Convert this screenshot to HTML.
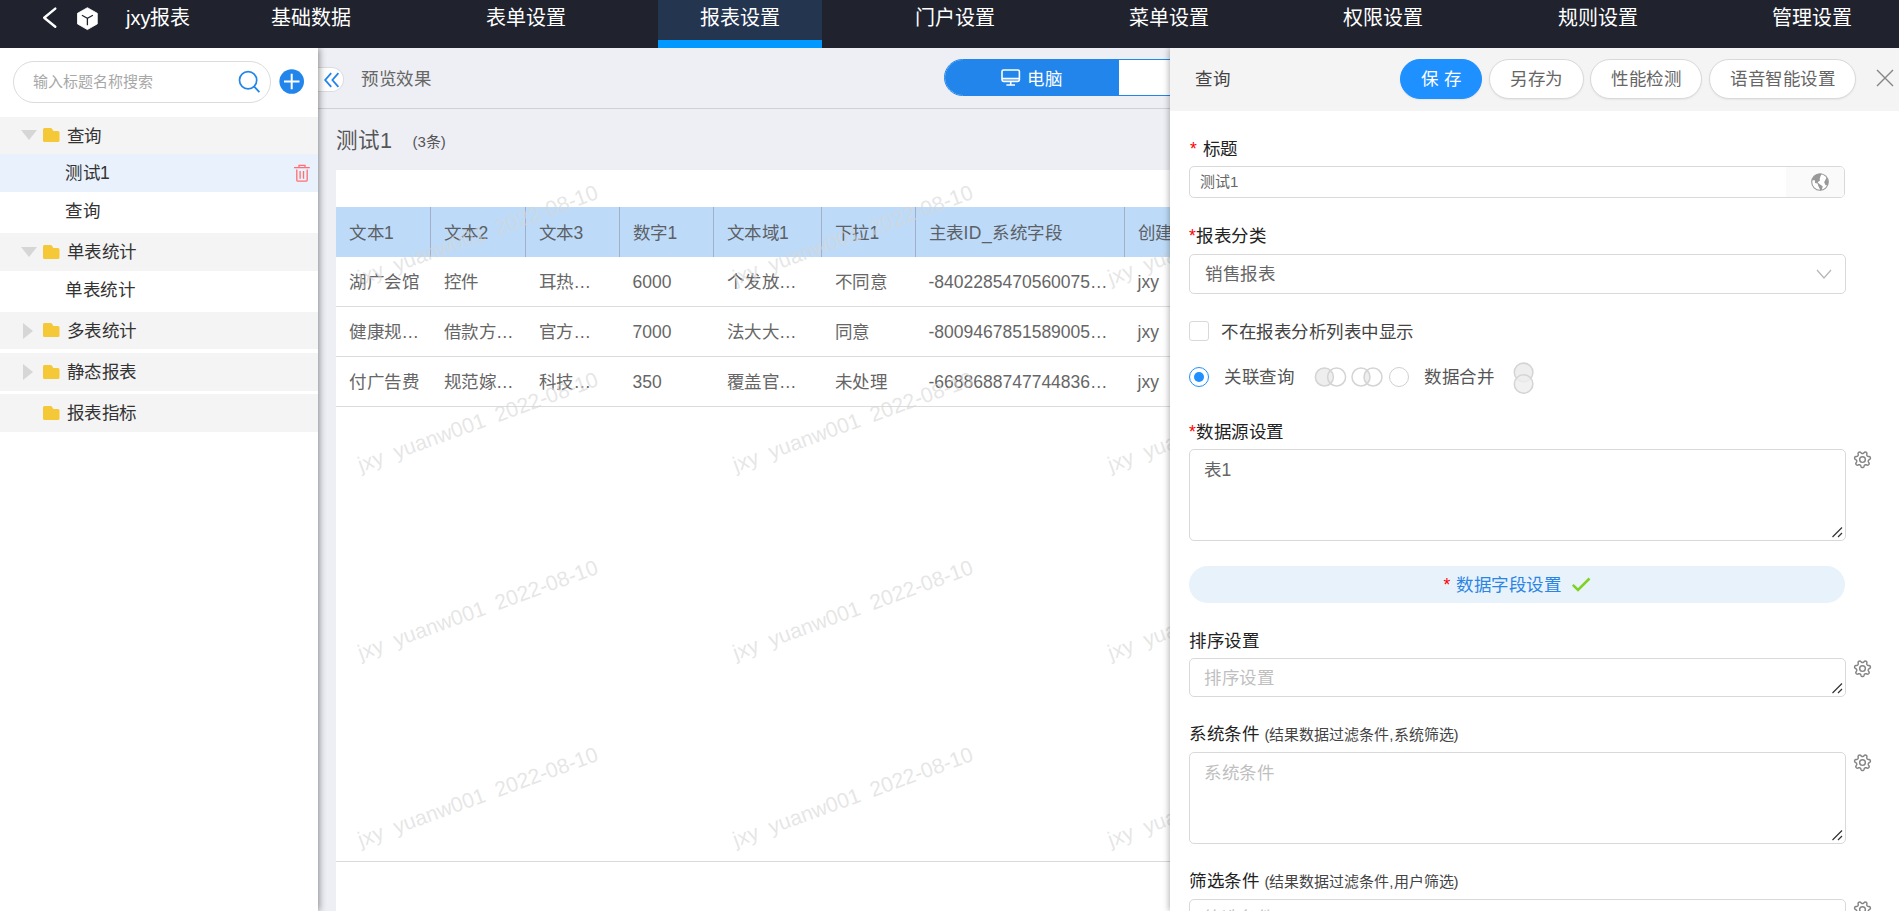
<!DOCTYPE html>
<html lang="zh-CN">
<head>
<meta charset="utf-8">
<title>jxy报表</title>
<style>
*{box-sizing:border-box;margin:0;padding:0}
html,body{width:1899px;height:911px;overflow:hidden}
body{font-family:"Liberation Sans",sans-serif;font-size:17.5px;color:#333;background:#eeeff5;position:relative}
.abs{position:absolute}
/* ---------- top nav ---------- */
#nav{position:absolute;left:0;top:0;width:1899px;height:48px;background:#20232e}
#nav .brand{position:absolute;left:126px;top:0;height:36px;line-height:36px;font-size:20px;color:#fff;white-space:nowrap}
#nav .tab{position:absolute;top:0;height:48px;width:164px;text-align:center;font-size:20px;line-height:36px;color:#fff;white-space:nowrap}
#nav .tab.on{background:#24354f;border-bottom:8px solid #0099ff}
/* ---------- sidebar ---------- */
#side{position:absolute;left:0;top:48px;width:318px;height:863px;background:#fff;box-shadow:1px 0 7px rgba(0,0,0,.45);z-index:5;clip-path:inset(0 -20px 0 0)}
#search{position:absolute;left:13px;top:13px;width:258px;height:42px;border:1px solid #dcdcdc;border-radius:21px;background:#fff}
#search span{position:absolute;left:19px;top:0;line-height:40px;font-size:15px;color:#a8a8a8;white-space:nowrap}
.grp{position:absolute;left:0;width:318px;height:37.5px;background:#f4f4f4;line-height:37.5px;font-size:17.5px;color:#333}
.grp .t{position:absolute;left:66.5px;top:1px;white-space:nowrap}
.leaf{position:absolute;left:0;width:318px;height:37.5px;line-height:37.5px;font-size:17.5px;color:#333}
.leaf .t{position:absolute;left:65px;top:1px;white-space:nowrap}
.leaf.sel{background:#e8f1fc}
.tri-d{position:absolute;left:20.6px;top:13.6px;width:0;height:0;border-left:8px solid transparent;border-right:8px solid transparent;border-top:10.4px solid #d6d6d6}
.tri-r{position:absolute;left:23px;top:11px;width:0;height:0;border-top:8px solid transparent;border-bottom:8px solid transparent;border-left:10px solid #d6d6d6}
.folder{position:absolute;left:43px;top:11.5px;width:16.5px;height:14px}
/* ---------- middle ---------- */
#mid{position:absolute;left:318px;top:48px;width:1581px;height:863px;background:#eeeff5}
#toolbar{position:absolute;left:0;top:0;width:1581px;height:61px;border-bottom:1px solid #cfcfd4}
#collapse{position:absolute;left:-1px;top:19px;width:26.5px;height:25px;background:#fff;border:1px solid #dcdcdc;border-left:none;border-radius:0 12.5px 12.5px 0}
#pv{position:absolute;left:43px;top:0;line-height:62px;font-size:17.5px;color:#666;white-space:nowrap}
#toggle{position:absolute;left:626px;top:11px;width:400px;height:37px;border-radius:18.5px;border:1px solid #2185eb;background:#fff;overflow:hidden}
#toggle .a{position:absolute;left:-1px;top:-1px;width:175px;height:37px;background:#2185eb;color:#fff;font-size:17.5px;line-height:37px}
#toggle .a span{position:absolute;left:83px;top:2px;white-space:nowrap}
#ttl{position:absolute;left:18px;top:78.5px;font-size:21.6px;line-height:28px;color:#555;white-space:nowrap}
#cnt{position:absolute;left:94.5px;top:84.5px;font-size:15px;line-height:18px;color:#555;white-space:nowrap}
#card{position:absolute;left:18px;top:122px;width:1563px;height:741px;background:#fff;overflow:hidden}
#card .bl{position:absolute;left:0;top:691px;width:1563px;height:1px;background:#d9d9d9}
table{position:absolute;left:0;top:37px;border-collapse:separate;border-spacing:0;table-layout:fixed;font-size:17.5px;color:#666}
th{height:50px;background:#bddbf8;font-weight:normal;text-align:left;padding:0 0 2px 13px;border-right:1px solid #a3afc6;white-space:nowrap;overflow:hidden;color:#5c6066}
td{height:50px;padding:0 0 2px 13px;border-bottom:1px solid #dcdcdc;white-space:nowrap;overflow:hidden}
td.l{padding-top:3px;padding-bottom:2px}
#wm{position:absolute;left:0;top:0;width:1563px;height:741px;overflow:hidden;pointer-events:none}
#wm i{position:absolute;font-style:normal;font-size:21.15px;line-height:24px;color:rgba(214,214,214,.62);white-space:pre;transform:rotate(-20deg);transform-origin:50% 50%;width:260px;text-align:center;margin-left:-129.5px;margin-top:-14.5px}
/* ---------- right panel ---------- */
#panel{position:absolute;left:1170px;top:48px;width:729px;height:863px;background:#fff;box-shadow:-1px 0 6px rgba(0,0,0,.3);z-index:6;overflow:hidden;clip-path:inset(0 0 0 -20px)}
#phead{position:absolute;left:0;top:0;width:729px;height:62.5px;background:#f4f4f4}
#phead .h{position:absolute;left:25px;top:0;line-height:63px;font-size:17.5px;color:#444}
.btn{position:absolute;top:11px;height:40px;border-radius:20px;border:1px solid #d9d9d9;box-shadow:0 1px 2px rgba(0,0,0,.06);background:#fff;color:#666;font-size:17.5px;line-height:38px;text-align:center;white-space:nowrap}
.btn.pri{background:#1e90ff;border-color:#1e90ff;color:#fff}
.lab{position:absolute;left:19px;font-size:17.5px;line-height:24px;color:#222;white-space:nowrap}
.lab b{font-weight:normal;color:#f00}
.lab small{font-size:15px;color:#444}
.inp{position:absolute;left:19px;width:657px;border:1px solid #d9d9d9;border-radius:5px;background:#fff;color:#666;white-space:nowrap}
.ph{color:#bfbfbf}
.gear{position:absolute;left:683px;width:19px;height:19px}
.rsz{position:absolute;right:2px;bottom:2px;width:12px;height:12px}

/* Chrome rounds 17.5px CJK advances down to 17px; compensate */
.grp,.leaf,#pv,#toggle .a,table,.btn,.lab,.inp,#phead .h,.pill{letter-spacing:.5px}
td.l,.lab small,.ls0{letter-spacing:0}
</style>
</head>
<body>

<!-- NAV -->
<div id="nav">
  <svg class="abs" style="left:40px;top:4px" width="22" height="28" viewBox="0 0 22 28"><path d="M15.3 4.6 L4.2 13.7 L15.3 22.8" fill="none" stroke="#fff" stroke-width="2.4" stroke-linecap="round" stroke-linejoin="round"/></svg>
  <svg class="abs" style="left:75px;top:5px" width="25" height="27" viewBox="0 0 25 27"><path d="M12.4 2.7 L22.3 8.3 L22.3 18.9 L12.4 24.6 L2.5 18.9 L2.5 8.3 Z" fill="#fff" stroke="#fff" stroke-width=".8" stroke-linejoin="round"/><path d="M6.9 10.3 L12.4 13.2 L17.9 10.3 M12.4 13.2 L12.4 20.2" fill="none" stroke="#20232e" stroke-width="1.3"/></svg>
  <div class="brand">jxy报表</div>
  <div class="tab" style="left:229px">基础数据</div>
  <div class="tab" style="left:444px">表单设置</div>
  <div class="tab on" style="left:658px">报表设置</div>
  <div class="tab" style="left:873px">门户设置</div>
  <div class="tab" style="left:1087px">菜单设置</div>
  <div class="tab" style="left:1301px">权限设置</div>
  <div class="tab" style="left:1516px">规则设置</div>
  <div class="tab" style="left:1730px">管理设置</div>
</div>

<!-- SIDEBAR -->
<div id="side">
  <div id="search"><span>输入标题名称搜索</span>
    <svg class="abs" style="left:222px;top:5.8px" width="28" height="28" viewBox="0 0 28 28"><circle cx="12.1" cy="12.2" r="8.6" fill="none" stroke="#2185eb" stroke-width="1.7"/><path d="M18 18.4 L23.4 24.2" stroke="#2185eb" stroke-width="1.8" stroke-linecap="butt"/></svg>
  </div>
  <svg class="abs" style="left:279px;top:21px" width="26" height="26" viewBox="0 0 26 26"><circle cx="12.7" cy="12.5" r="12.3" fill="#2185eb"/><path d="M5 12.5 H20.5 M12.7 4.8 V20.2" stroke="#fff" stroke-width="2"/></svg>

  <div class="grp" style="top:68.75px"><div class="tri-d"></div><svg class="folder" viewBox="0 0 16.5 14"><path d="M1.5 0 H7.6 Q8.6 0 9.2 1 L10.3 3.1 H15 Q16.5 3.1 16.5 4.6 V12.5 Q16.5 14 15 14 H1.5 Q0 14 0 12.5 V1.5 Q0 0 1.5 0 Z" fill="#f5c837"/></svg><span class="t">查询</span></div>
  <div class="leaf sel" style="top:106.25px"><span class="t">测试1</span>
    <svg class="abs" style="left:293px;top:9px" width="18" height="20" viewBox="0 0 18 20"><path d="M1 9.6 H16.8 M6 9 V7.4 H12 V9 M3.8 11.4 V22 Q3.8 23.2 5 23.2 H13 Q14.2 23.2 14.2 22 V11.4 M7.1 13 V20.8 M10.5 13 V20.8" transform="translate(0,-5)" fill="none" stroke="#ff6e73" stroke-width="1.3"/></svg>
  </div>
  <div class="leaf" style="top:143.75px"><span class="t">查询</span></div>
  <div class="grp" style="top:185px"><div class="tri-d"></div><svg class="folder" viewBox="0 0 16.5 14"><path d="M1.5 0 H7.6 Q8.6 0 9.2 1 L10.3 3.1 H15 Q16.5 3.1 16.5 4.6 V12.5 Q16.5 14 15 14 H1.5 Q0 14 0 12.5 V1.5 Q0 0 1.5 0 Z" fill="#f5c837"/></svg><span class="t">单表统计</span></div>
  <div class="leaf" style="top:222.5px"><span class="t">单表统计</span></div>
  <div class="grp" style="top:263.75px"><div class="tri-r"></div><svg class="folder" viewBox="0 0 16.5 14"><path d="M1.5 0 H7.6 Q8.6 0 9.2 1 L10.3 3.1 H15 Q16.5 3.1 16.5 4.6 V12.5 Q16.5 14 15 14 H1.5 Q0 14 0 12.5 V1.5 Q0 0 1.5 0 Z" fill="#f5c837"/></svg><span class="t">多表统计</span></div>
  <div class="grp" style="top:305px"><div class="tri-r"></div><svg class="folder" viewBox="0 0 16.5 14"><path d="M1.5 0 H7.6 Q8.6 0 9.2 1 L10.3 3.1 H15 Q16.5 3.1 16.5 4.6 V12.5 Q16.5 14 15 14 H1.5 Q0 14 0 12.5 V1.5 Q0 0 1.5 0 Z" fill="#f5c837"/></svg><span class="t">静态报表</span></div>
  <div class="grp" style="top:346.25px"><svg class="folder" viewBox="0 0 16.5 14"><path d="M1.5 0 H7.6 Q8.6 0 9.2 1 L10.3 3.1 H15 Q16.5 3.1 16.5 4.6 V12.5 Q16.5 14 15 14 H1.5 Q0 14 0 12.5 V1.5 Q0 0 1.5 0 Z" fill="#f5c837"/></svg><span class="t">报表指标</span></div>
</div>

<!-- MIDDLE -->
<div id="mid">
  <div id="toolbar">
    <div id="collapse"><svg class="abs" style="left:5.6px;top:4px" width="18" height="16" viewBox="0 0 18 16"><path d="M8.2 1.2 L2.2 8 L8.2 14.8 M15.4 1.2 L9.4 8 L15.4 14.8" fill="none" stroke="#2185eb" stroke-width="1.8"/></svg></div>
    <div id="pv">预览效果</div>
    <div id="toggle"><div class="a">
      <svg class="abs" style="left:57px;top:10px" width="20" height="18" viewBox="0 0 20 18"><rect x="1" y="1" width="17.4" height="11.4" rx="1.6" fill="none" stroke="#fff" stroke-width="1.6"/><path d="M1 9.6 H18.4 M9.7 12.4 V15.6 M5.4 16 H14" stroke="#fff" stroke-width="1.6" fill="none"/></svg>
      <span>电脑</span></div></div>
  </div>
  <div id="ttl">测试1</div>
  <div id="cnt">(3条)</div>
  <div id="card">
    <table>
      <colgroup><col style="width:94.5px"><col style="width:95px"><col style="width:94px"><col style="width:94px"><col style="width:108px"><col style="width:94px"><col style="width:209px"><col style="width:120px"></colgroup>
      <tr><th>文本1</th><th>文本2</th><th>文本3</th><th>数字1</th><th>文本域1</th><th>下拉1</th><th>主表ID_系统字段</th><th>创建人</th></tr>
      <tr><td>湖广会馆</td><td>控件</td><td>耳热…</td><td class="l">6000</td><td>个发放…</td><td>不同意</td><td class="l">-8402285470560075…</td><td class="l">jxy</td></tr>
      <tr><td>健康规…</td><td>借款方…</td><td>官方…</td><td class="l">7000</td><td>法大大…</td><td>同意</td><td class="l">-8009467851589005…</td><td class="l">jxy</td></tr>
      <tr><td>付广告费</td><td>规范嫁…</td><td>科技…</td><td class="l">350</td><td>覆盖官…</td><td>未处理</td><td class="l">-6688688747744836…</td><td class="l">jxy</td></tr>
    </table>
    <div class="bl"></div>
    <div id="wm"><i style="left:141.5px;top:67px">jxy  yuanw001  2022-08-10</i><i style="left:516.5px;top:67px">jxy  yuanw001  2022-08-10</i><i style="left:891.5px;top:67px">jxy  yuanw001  2022-08-10</i><i style="left:141.5px;top:254.5px">jxy  yuanw001  2022-08-10</i><i style="left:516.5px;top:254.5px">jxy  yuanw001  2022-08-10</i><i style="left:891.5px;top:254.5px">jxy  yuanw001  2022-08-10</i><i style="left:141.5px;top:442px">jxy  yuanw001  2022-08-10</i><i style="left:516.5px;top:442px">jxy  yuanw001  2022-08-10</i><i style="left:891.5px;top:442px">jxy  yuanw001  2022-08-10</i><i style="left:141.5px;top:629.5px">jxy  yuanw001  2022-08-10</i><i style="left:516.5px;top:629.5px">jxy  yuanw001  2022-08-10</i><i style="left:891.5px;top:629.5px">jxy  yuanw001  2022-08-10</i><i style="left:141.5px;top:817px">jxy  yuanw001  2022-08-10</i><i style="left:516.5px;top:817px">jxy  yuanw001  2022-08-10</i><i style="left:891.5px;top:817px">jxy  yuanw001  2022-08-10</i></div>
  </div>
</div>

<!-- RIGHT PANEL -->
<div id="panel">
  <div id="phead">
    <div class="h">查询</div>
    <div class="btn pri" style="left:230px;width:82px">保 存</div>
    <div class="btn" style="left:319px;width:95px">另存为</div>
    <div class="btn" style="left:420px;width:112px">性能检测</div>
    <div class="btn" style="left:539px;width:147px">语音智能设置</div>
    <svg class="abs" style="left:705px;top:20px" width="20" height="20" viewBox="0 0 20 20"><path d="M2 2 L18 18 M18 2 L2 18" stroke="#858585" stroke-width="1.4" fill="none"/></svg>
  </div>

  <div class="lab" style="top:89px;left:20px"><b>*</b> 标题</div>
  <div class="inp ls0" style="top:118px;height:32px;line-height:30px;font-size:15px;padding-left:10px;width:656px">测试1
    <div class="abs" style="right:0;top:0;width:58px;height:30px;background:#fafafa;border-radius:0 4px 4px 0"></div>
    <svg class="abs" style="left:620px;top:5px" width="20" height="20" viewBox="0 0 20 20"><circle cx="10" cy="10" r="8.3" fill="#fff"/><path d="M11.8 1.85 A8.4 8.4 0 0 0 1.9 8.2 L4.96 8.2 L4.96 10.9 L7.6 11.5 L8.2 13.85 L9.7 16.8 L10 18.4 L11.8 18.1 L12.7 14.15 L9.4 12.1 L7.6 10.3 L10 8.5 L9.7 6.7 L10.6 4.1 Z M16.6 5.6 L14.15 10.3 L15.6 13.25 L17.7 13.25 A8.4 8.4 0 0 0 16.6 5.6 Z" fill="#999"/><circle cx="10" cy="10" r="8.3" fill="none" stroke="#999" stroke-width="1.1"/></svg>
  </div>
  <div class="lab" style="top:176px"><b>*</b>报表分类</div>
  <div class="inp" style="top:206px;height:40px;line-height:38px;padding-left:15px;width:657px">销售报表
    <svg class="abs" style="left:625px;top:12px" width="18" height="14" viewBox="0 0 18 14"><path d="M2 3 L9 11 L16 3" fill="none" stroke="#b8b8b8" stroke-width="1.3"/></svg>
  </div>
  <div class="abs" style="left:19px;top:273px;width:20px;height:20px;border:1px solid #d9d9d9;border-radius:3px;background:#fff"></div>
  <div class="lab" style="left:51px;top:272px;color:#444">不在报表分析列表中显示</div>
  <div class="abs" style="left:19px;top:319px;width:20px;height:20px;border:1px solid #1e90ff;border-radius:50%;background:#fff"><div class="abs" style="left:4px;top:4px;width:10px;height:10px;border-radius:50%;background:#1e90ff"></div></div>
  <div class="lab" style="left:54px;top:317px;color:#555">关联查询</div>
  <svg class="abs" style="left:143px;top:318px" width="72" height="22" viewBox="0 0 72 22"><circle cx="11.4" cy="11" r="9" fill="#eee" stroke="#d4d4d4" stroke-width="1.55"/><circle cx="23.6" cy="11" r="9" fill="none" stroke="#d4d4d4" stroke-width="1.55"/><path d="M54 4.3 A9 9 0 0 1 54 17.7 A9 9 0 0 1 54 4.3 Z" fill="#eee"/><circle cx="48" cy="11" r="9" fill="none" stroke="#d4d4d4" stroke-width="1.55"/><circle cx="60" cy="11" r="9" fill="none" stroke="#d4d4d4" stroke-width="1.55"/></svg>
  <div class="abs" style="left:219px;top:319px;width:20px;height:20px;border:1px solid #d0d0d0;border-radius:50%;background:#fff"></div>
  <div class="lab" style="left:254px;top:317px;color:#555">数据合并</div>
  <svg class="abs" style="left:342px;top:313px" width="24" height="34" viewBox="0 0 24 34"><circle cx="11.6" cy="11.4" r="9.3" fill="#eee" stroke="#d4d4d4" stroke-width="1.55"/><circle cx="11.6" cy="23" r="9.3" fill="#eee" fill-opacity=".8" stroke="#d4d4d4" stroke-width="1.55"/></svg>

  <div class="lab" style="top:372px"><b>*</b>数据源设置</div>
  <div class="inp" style="top:401px;height:92px;padding:8px 14px;line-height:24px">表1<svg class="rsz" viewBox="0 0 12 12"><path d="M1.5 11 L11 1.5 M7 11 L11 7" stroke="#333" stroke-width="1.2" fill="none"/></svg></div>
  <svg class="gear" style="top:402px" viewBox="0 0 19 19"><path d="M9.50 3.55 L9.77 3.54 L10.04 3.50 L10.33 3.39 L10.66 3.13 L11.06 2.68 L11.50 2.25 L11.92 2.05 L12.30 2.03 L12.66 2.11 L12.99 2.25 L13.31 2.42 L13.59 2.65 L13.82 2.96 L13.92 3.42 L13.86 4.03 L13.76 4.62 L13.76 5.05 L13.85 5.34 L13.99 5.58 L14.15 5.79 L14.33 5.99 L14.52 6.18 L14.79 6.34 L15.20 6.43 L15.81 6.46 L16.42 6.54 L16.84 6.75 L17.09 7.03 L17.25 7.36 L17.35 7.71 L17.41 8.07 L17.41 8.43 L17.31 8.80 L17.01 9.16 L16.50 9.50 L15.97 9.79 L15.64 10.05 L15.47 10.31 L15.37 10.56 L15.30 10.82 L15.25 11.09 L15.23 11.36 L15.27 11.67 L15.46 12.05 L15.81 12.54 L16.12 13.06 L16.23 13.52 L16.16 13.90 L16.00 14.22 L15.79 14.52 L15.55 14.79 L15.27 15.01 L14.92 15.17 L14.45 15.16 L13.86 14.97 L13.31 14.74 L12.89 14.64 L12.59 14.67 L12.33 14.75 L12.08 14.86 L11.84 14.98 L11.62 15.14 L11.40 15.36 L11.22 15.75 L11.06 16.32 L10.84 16.90 L10.55 17.27 L10.22 17.45 L9.86 17.53 L9.50 17.55 L9.14 17.53 L8.78 17.45 L8.45 17.27 L8.16 16.90 L7.94 16.32 L7.78 15.75 L7.60 15.36 L7.38 15.14 L7.16 14.98 L6.92 14.86 L6.67 14.75 L6.41 14.67 L6.11 14.64 L5.69 14.74 L5.14 14.97 L4.55 15.16 L4.08 15.17 L3.73 15.01 L3.45 14.79 L3.21 14.52 L3.00 14.22 L2.84 13.90 L2.77 13.52 L2.88 13.06 L3.19 12.54 L3.54 12.05 L3.73 11.67 L3.77 11.36 L3.75 11.09 L3.70 10.82 L3.63 10.56 L3.53 10.31 L3.36 10.05 L3.03 9.79 L2.50 9.50 L1.99 9.16 L1.69 8.80 L1.59 8.43 L1.59 8.07 L1.65 7.71 L1.75 7.36 L1.91 7.03 L2.16 6.75 L2.58 6.54 L3.19 6.46 L3.80 6.43 L4.21 6.34 L4.48 6.18 L4.67 5.99 L4.85 5.79 L5.01 5.58 L5.15 5.34 L5.24 5.05 L5.24 4.62 L5.14 4.03 L5.08 3.42 L5.18 2.96 L5.41 2.65 L5.69 2.42 L6.01 2.25 L6.34 2.11 L6.70 2.03 L7.08 2.05 L7.50 2.25 L7.94 2.68 L8.34 3.13 L8.67 3.39 L8.96 3.50 L9.23 3.54 Z" fill="none" stroke="#858585" stroke-width="1.45" stroke-linejoin="round"/><circle cx="9.5" cy="9.5" r="2.85" fill="none" stroke="#858585" stroke-width="1.45"/></svg>
  <div class="abs pill" style="left:19px;top:518px;width:656px;height:36.5px;border-radius:18.5px;background:#e8f2fb;text-align:center;line-height:39.5px;color:#2b85e4;white-space:nowrap"><span style="color:#f00">*</span> 数据字段设置 <svg width="20" height="15" viewBox="0 0 20 15" style="vertical-align:-1px;margin-left:4px"><path d="M1.8 7.8 L7 13 L18.5 1.5" fill="none" stroke="#7ed321" stroke-width="2.5"/></svg></div>
  <div class="lab" style="top:581px">排序设置</div>
  <div class="inp ph" style="top:610px;height:39px;padding:0 14px;line-height:39px">排序设置<svg class="rsz" viewBox="0 0 12 12"><path d="M1.5 11 L11 1.5 M7 11 L11 7" stroke="#333" stroke-width="1.2" fill="none"/></svg></div>
  <svg class="gear" style="top:611px" viewBox="0 0 19 19"><path d="M9.50 3.55 L9.77 3.54 L10.04 3.50 L10.33 3.39 L10.66 3.13 L11.06 2.68 L11.50 2.25 L11.92 2.05 L12.30 2.03 L12.66 2.11 L12.99 2.25 L13.31 2.42 L13.59 2.65 L13.82 2.96 L13.92 3.42 L13.86 4.03 L13.76 4.62 L13.76 5.05 L13.85 5.34 L13.99 5.58 L14.15 5.79 L14.33 5.99 L14.52 6.18 L14.79 6.34 L15.20 6.43 L15.81 6.46 L16.42 6.54 L16.84 6.75 L17.09 7.03 L17.25 7.36 L17.35 7.71 L17.41 8.07 L17.41 8.43 L17.31 8.80 L17.01 9.16 L16.50 9.50 L15.97 9.79 L15.64 10.05 L15.47 10.31 L15.37 10.56 L15.30 10.82 L15.25 11.09 L15.23 11.36 L15.27 11.67 L15.46 12.05 L15.81 12.54 L16.12 13.06 L16.23 13.52 L16.16 13.90 L16.00 14.22 L15.79 14.52 L15.55 14.79 L15.27 15.01 L14.92 15.17 L14.45 15.16 L13.86 14.97 L13.31 14.74 L12.89 14.64 L12.59 14.67 L12.33 14.75 L12.08 14.86 L11.84 14.98 L11.62 15.14 L11.40 15.36 L11.22 15.75 L11.06 16.32 L10.84 16.90 L10.55 17.27 L10.22 17.45 L9.86 17.53 L9.50 17.55 L9.14 17.53 L8.78 17.45 L8.45 17.27 L8.16 16.90 L7.94 16.32 L7.78 15.75 L7.60 15.36 L7.38 15.14 L7.16 14.98 L6.92 14.86 L6.67 14.75 L6.41 14.67 L6.11 14.64 L5.69 14.74 L5.14 14.97 L4.55 15.16 L4.08 15.17 L3.73 15.01 L3.45 14.79 L3.21 14.52 L3.00 14.22 L2.84 13.90 L2.77 13.52 L2.88 13.06 L3.19 12.54 L3.54 12.05 L3.73 11.67 L3.77 11.36 L3.75 11.09 L3.70 10.82 L3.63 10.56 L3.53 10.31 L3.36 10.05 L3.03 9.79 L2.50 9.50 L1.99 9.16 L1.69 8.80 L1.59 8.43 L1.59 8.07 L1.65 7.71 L1.75 7.36 L1.91 7.03 L2.16 6.75 L2.58 6.54 L3.19 6.46 L3.80 6.43 L4.21 6.34 L4.48 6.18 L4.67 5.99 L4.85 5.79 L5.01 5.58 L5.15 5.34 L5.24 5.05 L5.24 4.62 L5.14 4.03 L5.08 3.42 L5.18 2.96 L5.41 2.65 L5.69 2.42 L6.01 2.25 L6.34 2.11 L6.70 2.03 L7.08 2.05 L7.50 2.25 L7.94 2.68 L8.34 3.13 L8.67 3.39 L8.96 3.50 L9.23 3.54 Z" fill="none" stroke="#858585" stroke-width="1.45" stroke-linejoin="round"/><circle cx="9.5" cy="9.5" r="2.85" fill="none" stroke="#858585" stroke-width="1.45"/></svg>
  <div class="lab" style="top:674px">系统条件 <small>(结果数据过滤条件,系统筛选)</small></div>
  <div class="inp ph" style="top:704px;height:92px;padding:8px 14px;line-height:24px">系统条件<svg class="rsz" viewBox="0 0 12 12"><path d="M1.5 11 L11 1.5 M7 11 L11 7" stroke="#333" stroke-width="1.2" fill="none"/></svg></div>
  <svg class="gear" style="top:705px" viewBox="0 0 19 19"><path d="M9.50 3.55 L9.77 3.54 L10.04 3.50 L10.33 3.39 L10.66 3.13 L11.06 2.68 L11.50 2.25 L11.92 2.05 L12.30 2.03 L12.66 2.11 L12.99 2.25 L13.31 2.42 L13.59 2.65 L13.82 2.96 L13.92 3.42 L13.86 4.03 L13.76 4.62 L13.76 5.05 L13.85 5.34 L13.99 5.58 L14.15 5.79 L14.33 5.99 L14.52 6.18 L14.79 6.34 L15.20 6.43 L15.81 6.46 L16.42 6.54 L16.84 6.75 L17.09 7.03 L17.25 7.36 L17.35 7.71 L17.41 8.07 L17.41 8.43 L17.31 8.80 L17.01 9.16 L16.50 9.50 L15.97 9.79 L15.64 10.05 L15.47 10.31 L15.37 10.56 L15.30 10.82 L15.25 11.09 L15.23 11.36 L15.27 11.67 L15.46 12.05 L15.81 12.54 L16.12 13.06 L16.23 13.52 L16.16 13.90 L16.00 14.22 L15.79 14.52 L15.55 14.79 L15.27 15.01 L14.92 15.17 L14.45 15.16 L13.86 14.97 L13.31 14.74 L12.89 14.64 L12.59 14.67 L12.33 14.75 L12.08 14.86 L11.84 14.98 L11.62 15.14 L11.40 15.36 L11.22 15.75 L11.06 16.32 L10.84 16.90 L10.55 17.27 L10.22 17.45 L9.86 17.53 L9.50 17.55 L9.14 17.53 L8.78 17.45 L8.45 17.27 L8.16 16.90 L7.94 16.32 L7.78 15.75 L7.60 15.36 L7.38 15.14 L7.16 14.98 L6.92 14.86 L6.67 14.75 L6.41 14.67 L6.11 14.64 L5.69 14.74 L5.14 14.97 L4.55 15.16 L4.08 15.17 L3.73 15.01 L3.45 14.79 L3.21 14.52 L3.00 14.22 L2.84 13.90 L2.77 13.52 L2.88 13.06 L3.19 12.54 L3.54 12.05 L3.73 11.67 L3.77 11.36 L3.75 11.09 L3.70 10.82 L3.63 10.56 L3.53 10.31 L3.36 10.05 L3.03 9.79 L2.50 9.50 L1.99 9.16 L1.69 8.80 L1.59 8.43 L1.59 8.07 L1.65 7.71 L1.75 7.36 L1.91 7.03 L2.16 6.75 L2.58 6.54 L3.19 6.46 L3.80 6.43 L4.21 6.34 L4.48 6.18 L4.67 5.99 L4.85 5.79 L5.01 5.58 L5.15 5.34 L5.24 5.05 L5.24 4.62 L5.14 4.03 L5.08 3.42 L5.18 2.96 L5.41 2.65 L5.69 2.42 L6.01 2.25 L6.34 2.11 L6.70 2.03 L7.08 2.05 L7.50 2.25 L7.94 2.68 L8.34 3.13 L8.67 3.39 L8.96 3.50 L9.23 3.54 Z" fill="none" stroke="#858585" stroke-width="1.45" stroke-linejoin="round"/><circle cx="9.5" cy="9.5" r="2.85" fill="none" stroke="#858585" stroke-width="1.45"/></svg>
  <div class="lab" style="top:821px">筛选条件 <small>(结果数据过滤条件,用户筛选)</small></div>
  <div class="inp ph" style="top:851px;height:92px;padding:6px 14px;line-height:24px">筛选条件</div>
  <svg class="gear" style="top:852px" viewBox="0 0 19 19"><path d="M9.50 3.55 L9.77 3.54 L10.04 3.50 L10.33 3.39 L10.66 3.13 L11.06 2.68 L11.50 2.25 L11.92 2.05 L12.30 2.03 L12.66 2.11 L12.99 2.25 L13.31 2.42 L13.59 2.65 L13.82 2.96 L13.92 3.42 L13.86 4.03 L13.76 4.62 L13.76 5.05 L13.85 5.34 L13.99 5.58 L14.15 5.79 L14.33 5.99 L14.52 6.18 L14.79 6.34 L15.20 6.43 L15.81 6.46 L16.42 6.54 L16.84 6.75 L17.09 7.03 L17.25 7.36 L17.35 7.71 L17.41 8.07 L17.41 8.43 L17.31 8.80 L17.01 9.16 L16.50 9.50 L15.97 9.79 L15.64 10.05 L15.47 10.31 L15.37 10.56 L15.30 10.82 L15.25 11.09 L15.23 11.36 L15.27 11.67 L15.46 12.05 L15.81 12.54 L16.12 13.06 L16.23 13.52 L16.16 13.90 L16.00 14.22 L15.79 14.52 L15.55 14.79 L15.27 15.01 L14.92 15.17 L14.45 15.16 L13.86 14.97 L13.31 14.74 L12.89 14.64 L12.59 14.67 L12.33 14.75 L12.08 14.86 L11.84 14.98 L11.62 15.14 L11.40 15.36 L11.22 15.75 L11.06 16.32 L10.84 16.90 L10.55 17.27 L10.22 17.45 L9.86 17.53 L9.50 17.55 L9.14 17.53 L8.78 17.45 L8.45 17.27 L8.16 16.90 L7.94 16.32 L7.78 15.75 L7.60 15.36 L7.38 15.14 L7.16 14.98 L6.92 14.86 L6.67 14.75 L6.41 14.67 L6.11 14.64 L5.69 14.74 L5.14 14.97 L4.55 15.16 L4.08 15.17 L3.73 15.01 L3.45 14.79 L3.21 14.52 L3.00 14.22 L2.84 13.90 L2.77 13.52 L2.88 13.06 L3.19 12.54 L3.54 12.05 L3.73 11.67 L3.77 11.36 L3.75 11.09 L3.70 10.82 L3.63 10.56 L3.53 10.31 L3.36 10.05 L3.03 9.79 L2.50 9.50 L1.99 9.16 L1.69 8.80 L1.59 8.43 L1.59 8.07 L1.65 7.71 L1.75 7.36 L1.91 7.03 L2.16 6.75 L2.58 6.54 L3.19 6.46 L3.80 6.43 L4.21 6.34 L4.48 6.18 L4.67 5.99 L4.85 5.79 L5.01 5.58 L5.15 5.34 L5.24 5.05 L5.24 4.62 L5.14 4.03 L5.08 3.42 L5.18 2.96 L5.41 2.65 L5.69 2.42 L6.01 2.25 L6.34 2.11 L6.70 2.03 L7.08 2.05 L7.50 2.25 L7.94 2.68 L8.34 3.13 L8.67 3.39 L8.96 3.50 L9.23 3.54 Z" fill="none" stroke="#858585" stroke-width="1.45" stroke-linejoin="round"/><circle cx="9.5" cy="9.5" r="2.85" fill="none" stroke="#858585" stroke-width="1.45"/></svg>
</div>

</body>
</html>
